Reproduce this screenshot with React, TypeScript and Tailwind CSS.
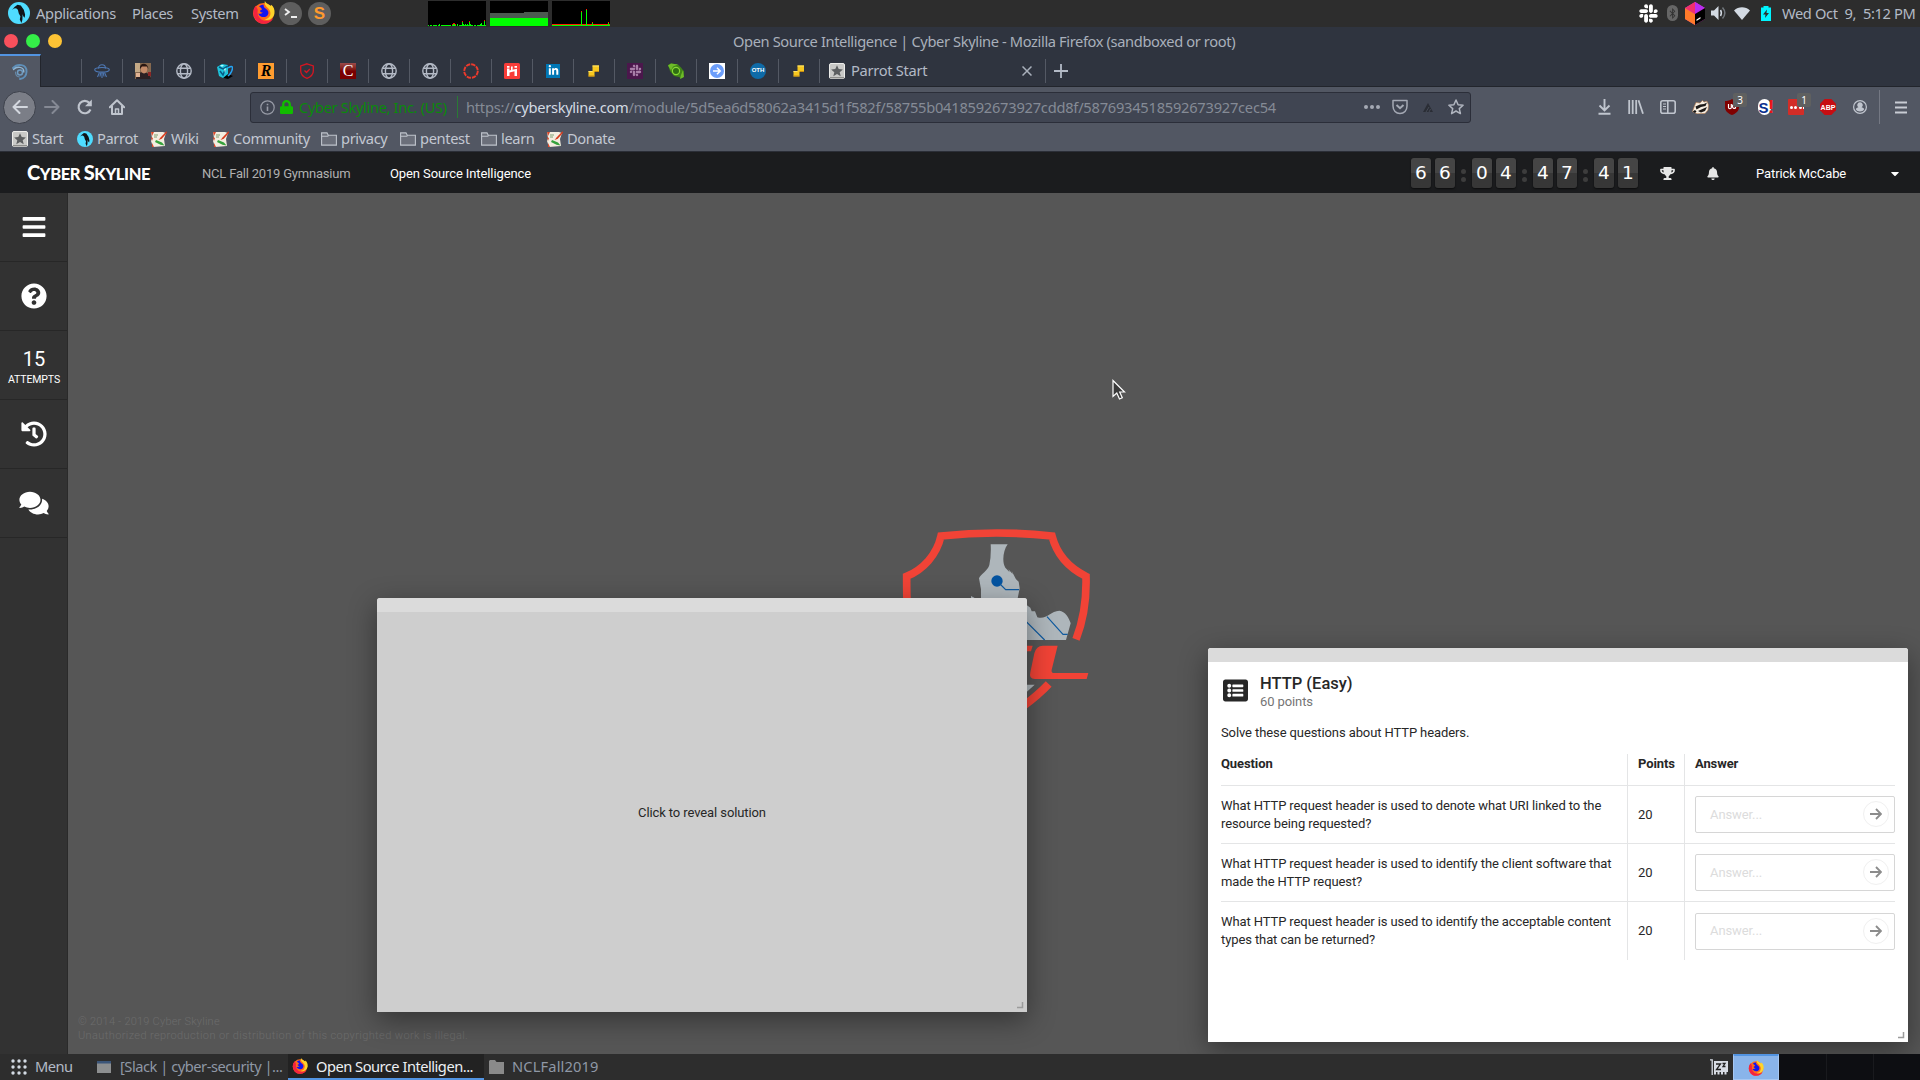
import React from "react";
import {
  FaBars,
  FaQuestionCircle,
  FaHistory,
  FaComments,
  FaTrophy,
  FaBell,
  FaCaretDown,
  FaSlack,
  FaBluetoothB,
  FaListAlt,
  FaLinkedinIn,
  FaLock,
} from "react-icons/fa";

/* ---------- Shared icons ---------- */

const Parrot = ({ size }: { size: number }) => (
  <svg width={size} height={size} viewBox="0 0 22 22" className="shrink-0">
    <circle cx="11" cy="11" r="11" fill="#4fdcff" />
    <path d="M4 8 6.500 5 9.500 2.800 12.800 3.600l3 4.200 1.300 4.800-.4 3.200-1.300-1.200-.8-2.400-.2 5.600-1 3.200-1.600-3.400.6-3.400-1.600-2.800-.9-3.600-1.800-1.600-2.200.4z" fill="#101418" />
  </svg>
);

const Firefox = ({ size }: { size: number }) => (
  <svg width={size} height={size} viewBox="0 0 22 22" className="shrink-0">
    <circle cx="11" cy="11.8" r="10" fill="#ff6a1c" />
    <path d="M1.2 10.5C.8 16 4.6 21.6 11 21.8c5 .1 8-2.6 9.3-5.6-3 3.4-8.400 3.600-11.600 1.200C5 14.800 5 11 5.600 8.400L3.600 4.500C2.200 6 1.300 8 1.200 10.500z" fill="#f4233f" />
    <path d="M12.400 0c-1 3 .6 4.600 2.800 6.600 3 2.800 3 6.600 1.200 8.800-1.200 1.500-3 2.300-4.600 2.400 5.200 1.500 9-1.600 9.700-6 .5-3.400-.9-6.600-3.200-8.200l-.3 1.200C16.600 3.200 13.400 2.800 12.400 0z" fill="#ffd42a" />
    <path d="M6.700 5.300c1-1.400 3.100-1.900 4.500-1.800-.3 1.500.2 2.700 1.800 3.600 2.700 1.500 3.400 4.200 2.100 6.200-1.500 2.300-4.800 2.700-7 1.300-1-.7-1.800-1.600-2-2.600 1.300.6 3.100.3 4.400-.9-1.700-.1-2.700-.5-2.700-1.400s.8-1.100 1.900-1.500c-.4-.9-1.400-2.300-3-2.900z" fill="#1414f0" />
  </svg>
);

const ParrotStart = ({ size = 16 }: { size?: number }) => (
  <svg width={size} height={size} viewBox="0 0 16 16" className="shrink-0">
    <rect x=".5" y=".5" width="15" height="15" rx="1.500" fill="#c9c9c7" stroke="#ececea" />
    <rect x="1" y="14" width="14" height="1.500" fill="#8c8c8a" />
    <path d="m8 2.300 1.700 3.800 4.200.4-3.200 2.700 1 4.100L8 11.100l-3.700 2.200 1-4.100L2.100 6.500l4.200-.4z" fill="#5c5e60" />
  </svg>
);

const Notes = () => (
  <svg width="16" height="16" viewBox="0 0 16 16" className="shrink-0">
    <path d="M0 1h12l3 1-2 6 1 7-12 1-2-6 1-3z" fill="#f3ede0" />
    <path d="M0 1h3l-2 4zM1 12l2 4H1zM0 6l2 1-1 3z" fill="#d9482b" />
    <path d="M15.500.2 9.500 6.400 7.600 9l3.200-1.300 5.200-6z" fill="#d83a1c" />
    <path d="m5 9 6 2.500 2.500 3-4-.8L4 11z" fill="#35a23c" />
    <path d="M3 4h4M3 6h3" stroke="#7f9f73" strokeWidth="1" />
  </svg>
);

const Folder = () => (
  <svg width="16" height="16" viewBox="0 0 16 16" fill="none" stroke="#bfc4cc" strokeWidth="1.100" className="shrink-0">
    <path d="M.6 14.100V1.900H6l1.300 2.400h8.100v9.800z" fill="#6b6f7a" />
    <path d="M.6 5.200h6.200l.8-.9" />
  </svg>
);

const Globe = () => (
  <svg width="16" height="16" viewBox="0 0 16 16" fill="none" stroke="#b4bac6" strokeWidth="1.400">
    <circle cx="8" cy="8" r="7.200" />
    <ellipse cx="8" cy="8" rx="3.600" ry="7.200" />
    <path d="M1.600 5.200h12.800M1.600 10.800h12.800" />
  </svg>
);

const YellowSteps = () => (
  <svg width="16" height="16" viewBox="0 0 16 16">
    <path d="M6.500 2.500H13V9H8.500v4.500h-6V8h4z" fill="#f7c820" />
    <path d="M2.500 12.500h6v1h-6zM8.500 8H13v1H8.500z" fill="#c98d10" />
    <path d="M6.500 2.500H13v1H6.500zM2.500 8h4v1h-4z" fill="#ffe36b" />
  </svg>
);

/* ---------- Desktop panel ---------- */

const CPU_BARS = [1, 0, 1, 1, 0, 1, 1, 1, 1, 0, 1, 2, 0, 1, 1, 1, 1, 1, 1, 1, 1, 1, 1, 0, 1, 2, 2, 1, 0, 2, 0, 1, 1, 1, 4, 2, 1, 2, 1, 2, 1, 4, 2, 1, 1, 0, 1, 1, 0, 1, 1, 1, 2, 3, 1, 1, 5, 1];

const DesktopPanel = () => (
  <div className="flex h-[27px] items-center bg-[#2d2d2d] text-[14.67px] tracking-[-0.37px] text-[#b3bac6]">
    <div className="ml-2 flex h-full w-7 items-center pb-[2px]"><Parrot size={22} /></div>
    <span className="w-[96px] pb-[2px]">Applications</span>
    <span className="w-[59px] pb-[2px]">Places</span>
    <span className="w-[61px] pb-[2px]">System</span>
    <div className="pb-[2px]"><Firefox size={23} /></div>
    <div className="mb-px ml-1 flex size-[23px] items-center justify-center rounded-full bg-[#5e5e5e]">
      <svg width="14" height="12" viewBox="0 0 14 12" fill="none" stroke="#f0f0f0" strokeWidth="1.800"><path d="m1 2 4 3-4 3M7 10h6" /></svg>
    </div>
    <div className="mb-px ml-[6px] flex size-[23px] items-center justify-center rounded-full bg-[#5e5e5e] font-['Liberation_Sans'] text-[17px] font-bold leading-none tracking-normal text-[#ff9a2e]">S</div>
    <div className="ml-[97px] flex gap-1">
      <svg width="58" height="25" viewBox="0 0 58 25" shapeRendering="crispEdges">
        <rect width="58" height="25" fill="#000" />
        {CPU_BARS.map((h, i) => (
          <g key={i}>
            <rect x={i} y={25 - h} width="1" height={h} fill="#00ff00" />
            {(h > 3 || (i > 23 && i < 28)) && <rect x={i} y={24 - h} width="1" height="1" fill="#ff0000" />}
          </g>
        ))}
      </svg>
      <svg width="58" height="25" viewBox="0 0 58 25" shapeRendering="crispEdges">
        <rect width="58" height="25" fill="#000" />
        <path d="M0 12h34v-1h24v7H0z" fill="#4b5a50" />
        <rect y="17" width="58" height="8" fill="#00ff00" />
      </svg>
      <svg width="58" height="25" viewBox="0 0 58 25" shapeRendering="crispEdges">
        <rect width="58" height="25" fill="#000" />
        <rect y="23" width="58" height="1" fill="#ff2000" />
        <rect y="24" width="58" height="1" fill="#00ff00" />
        <path d="M29 11h1v14h-1zM34 9h1v16h-1zM40 22h1v3h-1zM56 22h1v3h-1z" fill="#00ff00" />
        <path d="M29 10h1v1h-1zM34 8h1v1h-1zM40 21h1v1h-1zM56 21h1v1h-1z" fill="#ff2000" />
      </svg>
    </div>
    <div className="ml-auto flex items-center pb-px">
      <FaSlack className="size-[21px] text-white" />
      <div className="ml-[8px] flex h-4 w-[11px] items-center justify-center rounded-full bg-[#666] text-[#333]"><FaBluetoothB className="size-[11px]" /></div>
      <svg width="20" height="23" viewBox="0 0 20 23" className="ml-[7px]">
        <path d="M10 0 20 6v11l-10 6L0 17V6z" fill="#d634c8" />
        <path d="M0 6 10 12v11L0 17z" fill="#ff7a2a" />
        <path d="M0 6 10 0l3 2-3 10z" fill="#f0306c" />
        <path d="M10 0 20 6l-10 6z" fill="#b82df0" />
        <path d="M10 12 20 6v11l-10 6z" fill="#000" />
        <path d="M11.500 17.500 15.500 15v1.500l-4 2.500z" fill="#fff" />
      </svg>
      <svg width="16" height="16" viewBox="0 0 16 16" className="ml-[6px]" fill="none">
        <path d="M0 5.500h3L7.500 1v14L3 10.500H0z" fill="#d3dae3" />
        <path d="M9.500 5c1.200 2 1.200 4 0 6" stroke="#d3dae3" strokeWidth="1.500" />
        <path d="M11.500 2.500c3 3.500 3 7.500 0 11" stroke="#71767c" strokeWidth="1.500" />
      </svg>
      <svg width="16" height="13" viewBox="0 0 16 13" className="ml-[7px]"><path d="M0 3.500C4.500-.9 11.500-.9 16 3.500L8 13z" fill="#d3dae3" /></svg>
      <svg width="10" height="15" viewBox="0 0 10 15" className="ml-[11px]">
        <path d="M0 1.500h2.500V0h5v1.500H10V15H0z" fill="#00f5ff" />
        <path d="M6 3.500 2 8.500h2.500L4 12l4-5H5.500z" fill="#2d2d2d" />
      </svg>
      <span className="ml-[11px] w-[138px] whitespace-pre pb-px">Wed Oct  9,  5:12 PM</span>
    </div>
  </div>
);

/* ---------- Browser chrome ---------- */

const TabIcons: React.ReactNode[] = [
  <svg key="ufo" width="16" height="16" viewBox="0 0 16 16" fill="none" stroke="#4e78b4" strokeWidth="1.100">
    <path d="M4.500 5.500C4.500.5 11.500.5 11.500 5.500" /><ellipse cx="8" cy="6.800" rx="7.300" ry="2.300" />
    <path d="M5.500 9.500 3.500 14M8 9.500V15M10.500 9.500l2 4.500M6.800 9.500 6 13.500M9.200 9.500l.8 4" />
  </svg>,
  <svg key="photo" width="16" height="16" viewBox="0 0 16 16">
    <rect width="16" height="16" fill="#86694f" /><rect width="5" height="9" fill="#c4a986" /><path d="M1 16c0-4 3-7 7-7s8 3 8 7z" fill="#2b2124" />
    <ellipse cx="9" cy="6" rx="3.200" ry="4.400" fill="#c48a68" /><path d="M5 6C4-1 13-1 13.500 6L12 3.500 7 3.500z" fill="#2a1712" /><rect x="13" y="9" width="3" height="4" fill="#8d2626" />
    <path d="M1 10h4v4H1z" fill="#e0b394" />
  </svg>,
  <Globe key="g1" />,
  <svg key="cup" width="16" height="16" viewBox="0 0 16 16">
    <path d="m5 13 6-2 5 2-5 3-4-1z" fill="#000" /><path d="M0 4 5 1l6 1v9l-5 4-4-2z" fill="#1fc4dc" /><path d="m2 4 4 2 5-3M3 8l3 4 2-5" stroke="#075a86" fill="none" strokeWidth="1.500" />
    <path d="M11 5c5-4 6 0 2 6l-2 2" stroke="#25a5f5" strokeWidth="1.500" fill="none" /><path d="M3 2l4 0-2 2zM7 6l2-1-1 5z" fill="#a9fbff" />
  </svg>,
  <div key="r" className="flex size-4 items-center justify-center bg-[#ff9c30] font-['Liberation_Serif'] text-[16px] font-bold italic leading-none text-black">R</div>,
  <svg key="sh" width="14" height="16" viewBox="0 0 14 16" fill="none" stroke="#d51622" strokeWidth="1.300"><path d="M7 .8 13.300 3v5c0 3.500-3 6-6.300 7.300C3.700 14 .7 11.500.7 8V3z" /><path d="m4.500 7.500 2 2L9.800 6" /></svg>,
  <div key="c" className="flex size-4 items-center justify-center bg-gradient-to-b from-[#9a4a4a] to-[#7a0000] to-50% font-['Liberation_Serif'] text-[16px] leading-none text-white">C</div>,
  <Globe key="g2" />,
  <Globe key="g3" />,
  <svg key="ring" width="16" height="16" viewBox="0 0 16 16" fill="none"><circle cx="8" cy="8" r="6.800" stroke="#ee3a2c" strokeWidth="1.900" strokeDasharray="4.340 1" /></svg>,
  <svg key="hi" width="16" height="16" viewBox="0 0 16 16"><rect width="16" height="16" rx="1.500" fill="#f83c38" /><path d="M3 5.500h2.500V13H3zM3 3h2.500v1.700H3zM10.500 3H13v1.700h-2.500zM7 3.500h1.800l-.3 3.200 4.500-1V13h-2.500V8.200L5.500 9.400V7.600L7 7z" fill="#fff" /></svg>,
  <div key="in" className="flex size-[14px] items-center justify-center bg-[#0077b5] text-white"><FaLinkedinIn className="size-[11px]" /></div>,
  <YellowSteps key="y1" />,
  <div key="sl" className="flex size-4 items-center justify-center bg-[#4b174c] text-[#a97fa9]"><FaSlack className="size-[13px]" /></div>,
  <svg key="gr" width="16" height="16" viewBox="0 0 16 16"><path d="M0 2 3 .5l7 1 3 3 3 4-1 6-2 1-2-1.500L6 13 2 8z" fill="#3f8417" /><path d="M0 2.500 3 .5l7 1-5 2-2 4zM15 7l1 7-4 2 1-4z" fill="#6dbb28" /><circle cx="8" cy="8" r="3.600" fill="#2f6e12" stroke="#88d834" strokeWidth="1.200" /></svg>,
  <div key="ba" className="flex size-4 items-center justify-center bg-white">
    <svg width="14" height="14" viewBox="0 0 14 14"><circle cx="7" cy="7" r="7" fill="#6b9dfa" /><path d="M3 7h7M7 3.800 10.200 7 7 10.200" fill="none" stroke="#fff" strokeWidth="1.500" /></svg>
  </div>,
  <div key="oth" className="flex size-4 items-center justify-center rounded-full bg-[#0f6ba8] font-['Liberation_Sans'] text-[6px] font-bold text-white">OTH</div>,
  <YellowSteps key="y2" />,
];

const TabStrip = () => (
  <div className="flex h-[33px] border-b border-[#22252c] bg-[#2f343f] pr-2">
    <div className="-mb-px flex h-[33px] w-[41px] items-center justify-center border-r border-t-2 border-r-[#22252c] border-t-[#5294e2] bg-[#525763]">
      <svg width="16" height="16" viewBox="0 0 16 16" fill="none" strokeLinecap="round">
        <path d="M1 4C5-.5 15-.5 14.500 8c-.2 4-3 6.500-6.500 7" stroke="#5f8fb8" strokeWidth="1.900" />
        <path d="M1.500 5.500C5 2 12 2.500 11.800 8" stroke="#8fb5d3" strokeWidth="1.400" />
        <circle cx="8" cy="8.500" r="2.500" stroke="#6f9bc0" strokeWidth="1.500" />
        <path d="M3.500 8c0 3 1.500 4.800 4 5" stroke="#6689a8" strokeWidth="1.200" />
      </svg>
    </div>
    <div className="w-10" />
    {TabIcons.map((icon, i) => (
      <div key={i} className="flex w-[41px] items-center pt-px">
        <div className="h-6 w-px bg-[#545964]" />
        <div className="flex flex-1 items-center justify-center">{icon}</div>
      </div>
    ))}
    <div className="flex w-[226px] items-center pt-px">
      <div className="h-6 w-px bg-[#545964]" />
      <div className="ml-[9px] flex"><ParrotStart /></div>
      <span className="ml-[6px] pb-px text-[14.67px] tracking-[-0.3px] text-[#b3bac6]">Parrot Start</span>
      <svg width="10" height="10" viewBox="0 0 10 10" stroke="#a9b0bb" strokeWidth="1.500" className="ml-auto mr-[13px]"><path d="m.5.5 9 9M9.500.5l-9 9" /></svg>
    </div>
    <div className="flex items-center pt-px">
      <div className="h-6 w-px bg-[#545964]" />
      <svg width="14" height="14" viewBox="0 0 14 14" stroke="#b3bac6" strokeWidth="1.800" className="ml-[8px]"><path d="M7 0v14M0 7h14" /></svg>
    </div>
  </div>
);

const Slot = ({ children }: { children: React.ReactNode }) => (
  <div className="relative flex w-8 items-center justify-center">{children}</div>
);

const Badge = ({ children }: { children: React.ReactNode }) => (
  <span className="absolute -top-[6px] left-[17px] flex h-[14px] w-[14px] items-center justify-center rounded-[2px] bg-[#5f6060] text-[10px] tracking-normal text-white">{children}</span>
);

const NavBar = () => (
  <div className="flex h-10 items-center bg-[#525763] text-[#c0c5ce]">
    <div className="ml-[3px] flex size-[33px] shrink-0 items-center justify-center rounded-full border border-[#3d414b] bg-[#7b7e87]">
      <svg width="16" height="14" viewBox="0 0 16 14" fill="none" stroke="#d3d7de" strokeWidth="2" strokeLinecap="round" strokeLinejoin="round"><path d="M15 7H1.500M7.500 1l-6 6 6 6" /></svg>
    </div>
    <Slot><svg width="16" height="14" viewBox="0 0 16 14" fill="none" stroke="#858994" strokeWidth="2" strokeLinecap="round" strokeLinejoin="round"><path d="M1 7h13.500M8.500 1l6 6-6 6" /></svg></Slot>
    <Slot>
      <svg width="16" height="16" viewBox="0 0 16 16" fill="none" stroke="currentColor" strokeWidth="2.100" className="ml-[2px]"><path d="M13.500 10.500A6.200 6.200 0 1 1 12.500 4" /><path d="M14.800.5v6.700H8z" fill="currentColor" stroke="none" /></svg>
    </Slot>
    <Slot>
      <svg width="16" height="16" viewBox="0 0 16 16" fill="none" stroke="currentColor" strokeWidth="2" strokeLinejoin="round" className="ml-[2px]"><path d="M.8 8.300 8 1.200l7.200 7.100" strokeLinecap="round" /><path d="M3 7v8h10V7" /><path d="M6.500 15v-5h3v5" strokeWidth="1.500" /></svg>
    </Slot>
    <div className="ml-[118px] flex h-[31px] w-[1221px] shrink-0 items-center rounded-[3px] border border-[#2b2e39] bg-[#404552] text-[14.67px] tracking-[-0.35px]">
      <svg width="15" height="15" viewBox="0 0 15 15" fill="none" stroke="#979ba6" strokeWidth="1.200" className="ml-[9px]"><circle cx="7.500" cy="7.500" r="6.700" /><path d="M7.500 6.500V11M7.500 3.800v1.400" strokeWidth="1.600" /></svg>
      <FaLock className="ml-[5px] h-[14px] w-[13px] text-[#12bc00]" preserveAspectRatio="none" />
      <span className="ml-[6px] w-[158px] whitespace-nowrap text-[#0a8a0a]">Cyber Skyline, Inc. (US)</span>
      <div className="h-[22px] w-px bg-[#2a7a35]" />
      <span className="ml-[8px] whitespace-nowrap tracking-[-0.24px] text-[#858b96]">
        https://<span className="tracking-[-0.3px] text-[#d3dae3]">cyberskyline.com</span>/module/5d5ea6d58062a3415d1f582f/58755b0418592673927cdd8f/5876934518592673927cec54
      </span>
      <div className="ml-auto mr-[6px] flex items-center gap-3 text-[#b0b5bf]">
        <svg width="16" height="4" viewBox="0 0 16 4" fill="#a4a9b4"><circle cx="2" cy="2" r="2" /><circle cx="8" cy="2" r="2" /><circle cx="14" cy="2" r="2" /></svg>
        <svg width="16" height="16" viewBox="0 0 16 16" fill="none" stroke="#a4a9b4" strokeWidth="1.500"><path d="M1 1.500h14V7c0 4.500-3 7.500-7 7.500S1 11.500 1 7z" strokeLinejoin="round" /><path d="m4.500 6 3.500 3.200L11.500 6" strokeWidth="2" /></svg>
        <div className="flex w-4 justify-center"><svg width="10" height="9" viewBox="0 0 10 9"><path d="M5 0 10 9H0z" fill="#2a2d35" /><path d="M3 9 6 4M6 9l1.500-3" stroke="#454a56" /></svg></div>
        <svg width="16" height="16" viewBox="0 0 16 16" fill="none" stroke="#b0b5bf" strokeWidth="1.500" strokeLinejoin="round"><path d="m8 1 2.100 4.700 5 .5-3.800 3.400 1.100 5L8 12l-4.400 2.600 1.100-5L.9 6.200l5-.5z" /></svg>
      </div>
    </div>
    <div className="ml-[117px] flex items-center">
      <Slot><svg width="13" height="16" viewBox="0 0 13 16" fill="none" stroke="currentColor" strokeWidth="1.900"><path d="M6.500 0v11M1.500 6.500l5 5 5-5M.5 14.800h12" /></svg></Slot>
      <Slot><svg width="16" height="14" viewBox="0 0 16 14" fill="none" stroke="currentColor" strokeWidth="1.800"><path d="M1.200 0v14M4.700 0v14M8.200 0v14M10.500.3 15 13.700" /></svg></Slot>
      <Slot><svg width="16" height="14" viewBox="0 0 16 14" fill="none" stroke="currentColor" strokeWidth="1.600"><rect x=".8" y=".8" width="14.400" height="12.400" rx="2" /><path d="M7.800 1v12" /><path d="M3 4h3M3 6.500h3M3 9h3" strokeWidth="1.100" /></svg></Slot>
      <Slot>
        <svg width="17" height="14" viewBox="0 0 17 14">
          <path d="M.5 11.500 2.500 6 4 2.500 8 3l2.500-2.500L12 2l3-.8L16.500 5 16 10l-3 3.500-8 .3z" fill="#f7eee2" stroke="#b97c4b" strokeWidth=".6" />
          <path d="M3.500 6.500 8 4.500l4-.5 3-1.500L13.500 6 9 7 4.500 9.500zM6 11l4.500-2 4.500-2-2 4-4 1.500z" fill="#1d1a18" />
          <path d="M.8 11.500 3 10l1.500 1.500L3 13z" fill="#111" />
        </svg>
      </Slot>
      <Slot>
        <svg width="14" height="16" viewBox="0 0 14 16"><path d="M7 0c2 1.500 4.500 2 7 2v6c0 4-3 6.500-7 8-4-1.500-7-4-7-8V2c2.500 0 5-.5 7-2z" fill="#800000" /><path d="M3.500 5v3.500c0 1.500 2.800 1.500 2.800 0V5M10.500 6c-2-1-3 0-3 1.500s1.500 2.500 3 1.500V7.500" fill="none" stroke="#fff" strokeWidth="1.200" /></svg>
        <Badge>3</Badge>
      </Slot>
      <Slot>
        <div className="flex h-4 w-[13px] items-center rounded-full bg-white font-['Liberation_Sans'] text-[15px] font-bold leading-none tracking-[-0.5px] text-[#0b318f]"><span className="ml-[1px]">S</span><span className="text-[18px] font-black text-[#f01414]">!</span></div>
      </Slot>
      <Slot>
        <div className="flex size-4 items-center gap-[1.500px] rounded-[1px] bg-[#d32d27] pl-[2px]"><i className="size-[3px] rounded-full bg-white" /><i className="size-[3px] rounded-full bg-white" /><i className="size-[3px] rounded-full bg-white" /><i className="h-1 w-px bg-white" /></div>
        <Badge>1</Badge>
      </Slot>
      <Slot>
        <svg width="16" height="16" viewBox="0 0 16 16"><path d="M4.700 0h6.600L16 4.700v6.600L11.300 16H4.700L0 11.300V4.700z" fill="#c70d12" /><text x="8" y="10.700" textAnchor="middle" fontFamily="Liberation Sans" fontWeight="700" fontSize="7" letterSpacing="0" fill="#fff">ABP</text></svg>
      </Slot>
      <Slot><svg width="14" height="14" viewBox="0 0 14 14"><circle cx="7" cy="7" r="6.400" fill="none" stroke="currentColor" strokeWidth="1.200" /><path d="M7 2.200a2.800 2.800 0 0 1 1.600 5.100c1 .5 2.400.8 2.600 1.900-1.500 3-6.900 3-8.400 0 .2-1.100 1.600-1.400 2.600-1.900A2.800 2.800 0 0 1 7 2.200z" fill="currentColor" /></svg></Slot>
      <div className="ml-[3px] h-[34px] w-px bg-[#747883]" />
      <svg width="12" height="13" viewBox="0 0 12 13" stroke="#c8ccd4" strokeWidth="2" className="ml-[15px]"><path d="M0 1.500h12M0 6.500h12M0 11.500h12" /></svg>
    </div>
  </div>
);

const Bookmark = ({ icon, label, className }: { icon: React.ReactNode; label: string; className: string }) => (
  <div className={`flex shrink-0 items-center gap-1 ${className}`}>{icon}<span className="pb-[2px]">{label}</span></div>
);

const Bookmarks = () => (
  <div className="flex h-[25px] items-center border-b border-[#2b2e37] bg-[#525763] pl-3 text-[14.67px] tracking-[-0.37px] text-[#c3c8d2]">
    <Bookmark icon={<ParrotStart />} label="Start" className="w-[65px]" />
    <Bookmark icon={<Parrot size={16} />} label="Parrot" className="w-[74px]" />
    <Bookmark icon={<Notes />} label="Wiki" className="w-[62px]" />
    <Bookmark icon={<Notes />} label="Community" className="w-[108px]" />
    <Bookmark icon={<Folder />} label="privacy" className="w-[79px]" />
    <Bookmark icon={<Folder />} label="pentest" className="w-[81px]" />
    <Bookmark icon={<Folder />} label="learn" className="w-[66px]" />
    <Bookmark icon={<Notes />} label="Donate" className="w-[80px]" />
  </div>
);

/* ---------- Web page ---------- */

const Digit = ({ value }: { value: string }) => (
  <span className="flex h-[30px] w-5 items-center justify-center rounded-[3px] bg-gradient-to-b from-[#454545] from-50% to-[#373737] to-50% shadow-[0_1px_2px_rgba(0,0,0,.6)]">{value}</span>
);

const Colon = () => (
  <span className="mx-[2px] flex w-[5px] flex-col gap-[3px] pt-1">
    <i className="size-[5px] rounded-full bg-[#3d3d3d]" />
    <i className="size-[5px] rounded-full bg-[#3d3d3d]" />
  </span>
);

const SiteHeader = () => (
  <div className="flex h-10 items-center bg-[#1b1c1e] font-['Roboto'] text-[13px] tracking-[-0.1px] text-white">
    <div className="ml-[27px] w-[175px] whitespace-nowrap pb-[2px] font-['Lato'] text-[16.500px] font-black leading-none tracking-[-0.4px]">
      <span className="text-[20px]">C</span>YBER <span className="text-[20px]">S</span>KYLINE
    </div>
    <span className="w-[188px] pt-px tracking-[-0.2px] text-[#b0b0b0]">NCL Fall 2019 Gymnasium</span>
    <span className="pt-px">Open Source Intelligence</span>
    <div className="ml-auto flex items-center gap-1 font-['DejaVu_Sans'] text-[18.500px] tracking-normal">
      <Digit value="6" /><Digit value="6" /><Colon />
      <Digit value="0" /><Digit value="4" /><Colon />
      <Digit value="4" /><Digit value="7" /><Colon />
      <Digit value="4" /><Digit value="1" />
    </div>
    <FaTrophy className="ml-[22px] h-[13px] w-[15px] text-[#e6e6e6]" />
    <FaBell className="ml-[32px] h-[13px] w-[12px] text-[#e6e6e6]" />
    <span className="ml-[37px] w-[133px] pt-px">Patrick McCabe</span>
    <FaCaretDown className="mr-[19px] h-[13px] w-[12px]" />
  </div>
);

const SideCell = ({ children }: { children: React.ReactNode }) => (
  <div className="flex h-[69px] flex-col items-center justify-center border-b border-[#272727] pl-px">{children}</div>
);

const Sidebar = () => (
  <div className="w-[68px] shrink-0 border-r border-[#2a2a2a] bg-[#323232] font-['Roboto'] text-white">
    <SideCell><FaBars className="size-[26px]" /></SideCell>
    <SideCell><FaQuestionCircle className="size-[26px]" /></SideCell>
    <SideCell>
      <span className="mt-[5px] text-[20px] leading-6">15</span>
      <span className="mt-[1px] text-[10.500px] leading-4 tracking-[-0.1px]">ATTEMPTS</span>
    </SideCell>
    <SideCell><FaHistory className="size-[26px]" /></SideCell>
    <SideCell><FaComments className="h-[26px] w-[30px]" /></SideCell>
  </div>
);

const Crest = () => (
  <svg width="260" height="240" viewBox="0 0 780 720" className="absolute left-[792px] top-[307px]">
    <path d="M141 300C140 275 140 250 140 229C190 208 230 165 243 108Q410 90 576 108C588 155 620 200 678 229C680 300 669 365 648 418" fill="none" stroke="#f14336" strokeWidth="23" />
    <path d="M490 618Q535 585 566 552" fill="none" stroke="#f14336" strokeWidth="24" />
    <path d="M392 133H443C430 150 425 185 436 203L449 217 445 208 458 222 455 213 468 238 476 245 479 265 472 300H363V268L357 235C362 222 384 212 388 195Q394 165 392 133zM333 288l10 5v7h-10zM480 300 511 323 515 334 525 334 532 352C560 360 570 333 598 332 615 333 628 355 632 370L618 420H480zM480 554h44l-24 22z" fill="#aeb6bb" />
    <circle cx="411" cy="243" r="17" fill="#0453a0" />
    <path d="m420 252 17 17h40M480 346l74 74M561 350l48 53h14" fill="none" stroke="#0f5a9f" strokeWidth="3.500" />
    <path d="M490 437h28l-5 17h-23zM548 437h45l-18 72q-2 10 8 10h102l-5 18H524q-18 0-13-20l12-57q6-23 25-23z" fill="#f14336" />
  </svg>
);

const ResizeHandle = () => (
  <svg width="7" height="7" viewBox="0 0 7 7" className="absolute bottom-[3px] right-[3px]"><path d="M0 5.500h5.500V0" fill="none" stroke="#9c9c9c" strokeWidth="1.500" /></svg>
);

const QUESTIONS = [
  "What HTTP request header is used to denote what URI linked to the resource being requested?",
  "What HTTP request header is used to identify the client software that made the HTTP request?",
  "What HTTP request header is used to identify the acceptable content types that can be returned?",
];

const Row = ({ text, last }: { text: string; last: boolean }) => (
  <div className={`grid h-[58px] grid-cols-[407px_57px_1fr] ${last ? "" : "border-b border-[#e4e5e6]"}`}>
    <div className="flex items-center border-r border-[#e4e5e6] pr-2 leading-[18px]">{text}</div>
    <div className="flex items-center border-r border-[#e4e5e6] pl-[10px]">20</div>
    <div className="flex items-center pl-[10px]">
      <div className="flex h-[37px] w-[200px] items-center justify-between rounded-[2px] border border-[#d6d6d6] pl-[14px] pr-[5px] text-[#dcdcdc]">
        <span>Answer...</span>
        <div className="mb-px flex size-[26px] items-center justify-center rounded-full border border-[#f0f0f0]">
          <svg width="12" height="12" viewBox="0 0 12 12" fill="none" stroke="#8c8c8c" strokeWidth="1.900"><path d="M0 6h10.500M6 1l5 5-5 5" /></svg>
        </div>
      </div>
    </div>
  </div>
);

const Workspace = () => (
  <div className="relative flex-1 overflow-hidden bg-[#565656] font-['Roboto'] text-[13px] tracking-[-0.1px] text-[#272727]">
    <Crest />
    <div className="absolute bottom-[11px] left-[10px] text-[11px] font-light leading-[14px] tracking-[0.39px] text-[#6c6c6c]">
      <p className="tracking-[0.22px]">© 2014 - 2019 Cyber Skyline</p>
      <p>Unauthorized reproduction or distribution of this copyrighted work is illegal.</p>
    </div>

    <div className="absolute left-[309px] top-[405px] flex h-[414px] w-[650px] flex-col rounded-t-[3px] bg-[#cecece] shadow-[0_8px_28px_rgba(0,0,0,.4)]">
      <div className="h-[14px] rounded-t-[3px] bg-[#dbdbdb]" />
      <div className="flex flex-1 items-center justify-center pt-px">Click to reveal solution</div>
      <ResizeHandle />
    </div>

    <div className="absolute left-[1140px] top-[455px] flex h-[394px] w-[700px] flex-col rounded-t-[3px] bg-white shadow-[0_8px_28px_rgba(0,0,0,.4)]">
      <div className="h-[14px] rounded-t-[3px] bg-[#dbdbdb]" />
      <div className="px-[13px] pt-[12px]">
        <div className="flex items-center">
          <FaListAlt className="mb-1 ml-[2px] size-[25px]" />
          <div className="ml-3">
            <div className="text-[16.500px] font-medium leading-5 tracking-normal">HTTP (Easy)</div>
            <div className="leading-4 text-[#757575]">60 points</div>
          </div>
        </div>
        <p className="mt-[14px] leading-[18px]">Solve these questions about HTTP headers.</p>
        <div className="mt-[12px]">
          <div className="grid h-8 grid-cols-[407px_57px_1fr] border-b border-[#e4e5e6] font-bold leading-[20px]">
            <div className="border-r border-[#e4e5e6]">Question</div>
            <div className="border-r border-[#e4e5e6] pl-[10px]">Points</div>
            <div className="pl-[10px]">Answer</div>
          </div>
          {QUESTIONS.map((q, i) => <Row key={q} text={q} last={i === 2} />)}
        </div>
      </div>
      <ResizeHandle />
    </div>

    <svg width="14" height="22" viewBox="0 0 14 22" className="absolute left-[1044px] top-[186px]">
      <path d="M1 1.500V17.500L4.800 14l2.700 6 2.800-1.300L7.700 13H12.500z" fill="#3a3a3a" stroke="#fff" strokeWidth="1.200" />
    </svg>
  </div>
);

/* ---------- Bottom task bar ---------- */

const TaskBar = () => (
  <div className="flex h-[26px] items-center bg-[#2d2d2d] text-[14.67px] tracking-[-0.37px] text-[#b3bac6]">
    <svg width="16" height="16" viewBox="0 0 16 16" fill="#d3dae3" className="ml-[11px]">
      {[2, 8, 14].map((y) => [2, 8, 14].map((x) => <circle key={`${x}-${y}`} cx={x} cy={y} r="1.700" />))}
    </svg>
    <span className="ml-2 w-[62px] pb-[2px] tracking-[-0.5px]">Menu</span>
    <svg width="14" height="12" viewBox="0 0 14 12"><rect width="14" height="12" fill="#8d8f90" /><rect width="14" height="2.500" fill="#3b5578" /></svg>
    <span className="ml-[9px] w-[168px] whitespace-nowrap pb-[2px] tracking-[-0.47px] text-[#8f98a6]">[Slack | cyber-security |...</span>
    <div className="flex h-full w-[196px] items-center border-b-2 border-[#5294e2] bg-[#222222] pl-1 text-[#eceff3]">
      <Firefox size={16} />
      <span className="ml-[8px] whitespace-nowrap tracking-[-0.5px]">Open Source Intelligen...</span>
    </div>
    <svg width="15" height="14" viewBox="0 0 15 14" className="ml-[5px]"><path d="M0 1 1 0h5l1.500 2H15v12H0z" fill="#8a8a8a" /></svg>
    <span className="ml-2 pb-[2px] tracking-[0.15px] text-[#8f98a6]">NCLFall2019</span>
    <svg width="18" height="16" viewBox="0 0 18 16" className="ml-auto mr-[5px]">
      <path d="M0 .8h2.200V16" fill="none" stroke="#d8dce4" strokeWidth="1.300" />
      <path d="M4 2h14v11h-1.500v2.500h-2V13h-1.500v2.500h-2V13H9.500v2.500h-2V13H6v2.500H4z" fill="#d8dce4" />
      <path d="M6 5h4.500L6.500 10.500H11M12.500 4.500H15l-2 3h2.500" fill="none" stroke="#222" strokeWidth="1.300" />
    </svg>
    <div className="flex h-full w-[46px] items-center justify-center border border-t-2 border-[#a6c7f2] border-t-[#5294e2] bg-[#89b4ea]"><Firefox size={16} /></div>
    <div className="h-full w-[47px] bg-[#0d0e12]" />
    <div className="h-full w-[47px] border-l border-[#191a1e] bg-[#0d0e12]" />
    <div className="h-full w-[47px] border-l border-[#191a1e] bg-[#0d0e12]" />
  </div>
);

export default function App() {
  return (
    <div className="flex h-[1080px] w-[1920px] flex-col overflow-hidden font-['Noto_Sans',sans-serif]">
      <DesktopPanel />
      <div className="flex h-[27px] items-center bg-[#2f343f]">
        <div className="ml-1 flex w-[120px] gap-2">
          <i className="size-[14px] rounded-full bg-[#f8505c]" />
          <i className="size-[14px] rounded-full bg-[#34ee48]" />
          <i className="size-[14px] rounded-full bg-[#fdc335]" />
        </div>
        <span className="ml-[609px] mt-px whitespace-nowrap text-[14.67px] leading-5 tracking-[-0.38px] text-[#a9b0bb]">Open Source Intelligence | Cyber Skyline - Mozilla Firefox (sandboxed or root)</span>
      </div>
      <TabStrip />
      <NavBar />
      <Bookmarks />
      <div className="h-px bg-[#1b1c1e]" />
      <SiteHeader />
      <div className="flex min-h-0 flex-1">
        <Sidebar />
        <Workspace />
      </div>
      <TaskBar />
    </div>
  );
}
